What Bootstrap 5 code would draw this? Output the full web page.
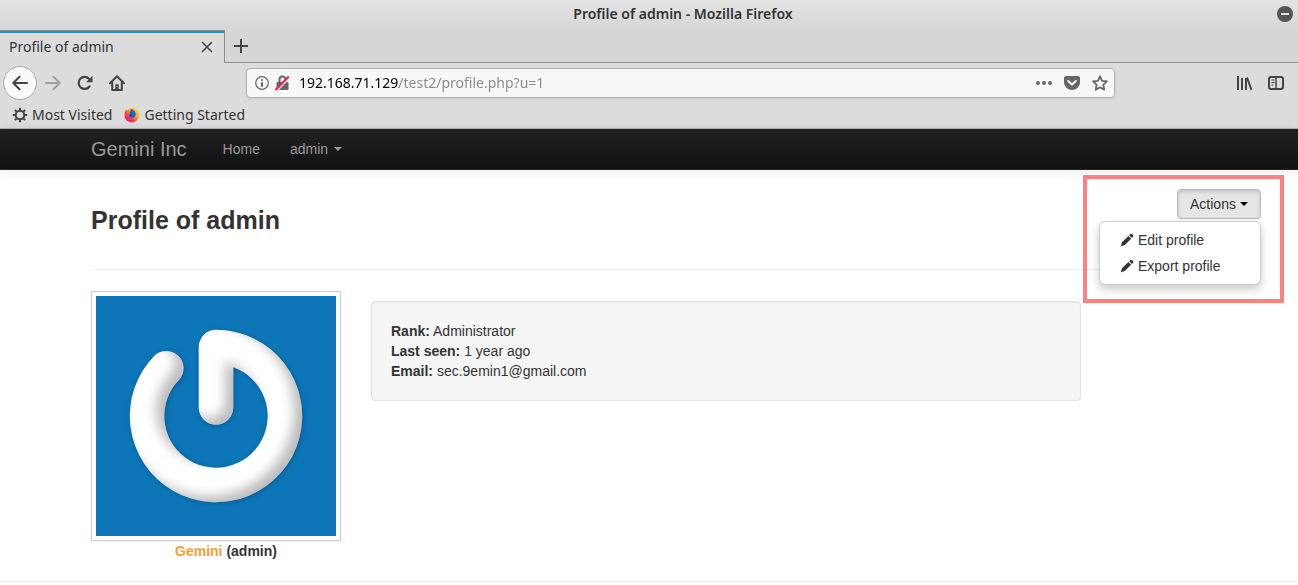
<!DOCTYPE html>
<html lang="en">
<head>
<meta charset="utf-8">
<meta name="viewport" content="width=device-width, initial-scale=1">
<title>Profile of admin</title>
<link rel="stylesheet" href="https://cdn.jsdelivr.net/npm/bootstrap@5.3.0/dist/css/bootstrap.min.css">
<style>
  body { font-family: "Liberation Sans", Arial, sans-serif; font-size: 14px; line-height: 20px; color: #333; background: #fff; }
  .browser { font-family: "Noto Sans", "Open Sans", sans-serif; color: #333; background: #dcdcdc; }
  .browser .btn { --bs-btn-border-width: 0px; line-height: 1; color: #444; }
  .browser svg, .dropdown-menu svg { display: block; flex: none; }

  /* window frame */
  .titlebar { height: 30px; padding-left: 68px; background: linear-gradient(#e3e3e3, #d6d6d6); font-size: 14px; line-height: 28px; font-weight: 600; }
  .minimise { top: 6px; right: 5px; }
  .tabstrip { height: 33px; background: #d6d6d6; }
  .tab { width: 225px; padding: 0 11px 0 9px; border-top: 1px solid #8c8c8c; border-right: 1px solid #8c8c8c; background: #dcdcdc; box-shadow: inset 0 2px #2090d0; font-size: 14px; line-height: 32px; }
  .tabstrip-rest { border-bottom: 1px solid #8c8c8c; }
  .toolbar { height: 40px; padding: 0 6px 0 3px; }
  .tool { width: 32px; height: 32px; }
  .tool-back { width: 34px; height: 34px; border: 1px solid #a8a8a8 !important; background: #f9f9f9 !important; }
  .urlbar { height: 30px; min-width: 0; margin: 0 113px; padding: 0 6px 0 8px; border: 1px solid #b0b0b0; border-radius: 4px; background: #f8f8f8; box-shadow: 0 1px 3px rgba(0,0,0,.08); }
  .page-tools { gap: 12px; }
  .address { min-width: 0; border: 0; outline: 0; font-size: 14px; line-height: 28px; color: #888;
             background: linear-gradient(90deg, #000 100px, #888 100px); -webkit-background-clip: text; background-clip: text; -webkit-text-fill-color: transparent; }
  .bookmarks { height: 26px; padding-bottom: 2px; border-bottom: 1px solid #b4b4b4; font-size: 14px; line-height: 22px; }
  .bookmarks a { color: #333; }

  /* site */
  .page-frame { padding-left: 91px; padding-right: 37px; }
  .site-nav { height: 41px; background: linear-gradient(#222, #111); border-bottom: 1px solid #252525; box-shadow: 0 1px 10px rgba(0,0,0,.1); }
  .site-nav a { color: #999; }
  .site-nav .navbar-brand { margin-right: 21px; font-size: 20px; line-height: 20px; }
  .site-nav .nav-link { --bs-nav-link-color: #999; padding: 0 15px !important; line-height: 20px; }
  .dropdown-toggle::after { border-top-width: 4px; border-left-width: 4px; border-right-width: 4px; vertical-align: 3px; margin-left: 4px; }
  .site-nav .dropdown-toggle::after { margin-left: 6px; }
  .profile-head { height: 100px; padding-top: 19px; border-bottom: 1px solid #eee; }
  .profile-head h3 { padding-top: 11px; font-size: 25px; line-height: 40px; font-weight: 700; }
  .btn-actions { width: 84px; height: 30px; padding: 0; font-size: 14px; line-height: 20px; color: #333 !important; border: 1px solid #bbb !important; background: #e6e6e6 !important; box-shadow: inset 0 2px 4px rgba(0,0,0,.15), 0 1px 2px rgba(0,0,0,.05); border-radius: 4px; }
  .btn-actions::after { color: #000; }
  .actions-menu { top: 32px; right: 0; width: 162px; padding: 5px 0; font-size: 14px; border: 1px solid #ccc; border-radius: 6px; box-shadow: 0 5px 10px rgba(0,0,0,.2); }
  .actions-menu .dropdown-item { padding: 3px 20px; line-height: 20px; color: #333; gap: 4px; }
  .callout { top: -14px; right: -23px; width: 201px; height: 128px; border: 4px solid #ff8080; z-index: 1001; pointer-events: none; }
  .profile-body { padding: 21px 0 20px; }
  .profile-side { width: 270px; flex: none; }
  .avatar { width: 250px; padding: 4px; border: 1px solid #ccc; box-shadow: 0 1px 3px rgba(0,0,0,.055); }
  .member { color: #f89f2f; }
  .info { margin: 10px 180px 0 10px; padding: 19px; border: 1px solid #e3e3e3; border-radius: 4px; background: #f5f5f5; box-shadow: inset 0 1px 1px rgba(0,0,0,.05); }
  .page-end { border-top: 1px solid #eee; }
</style>
</head>
<body>
<header class="browser">
  <div class="titlebar position-relative text-center">
    Profile of admin - Mozilla Firefox
    <button class="minimise btn p-0 position-absolute" aria-label="Minimise">
      <svg width="16" height="16"><circle cx="8" cy="8" r="8" fill="#555"/><path d="M4 8h8" stroke="#e4e4e4" stroke-width="2"/></svg>
    </button>
  </div>
  <div class="tabstrip d-flex">
    <div class="tab d-flex align-items-center justify-content-between">
      <span>Profile of admin</span>
      <button class="btn p-0" aria-label="Close tab">
        <svg width="12" height="12" fill="none" stroke="#444" stroke-width="1.6" stroke-linecap="round"><path d="M1.500 1.500l9 9M10.500 1.500l-9 9"/></svg>
      </button>
    </div>
    <div class="tabstrip-rest flex-grow-1 d-flex align-items-center ps-2">
      <button class="btn p-0" aria-label="New tab">
        <svg width="16" height="16" fill="none" stroke="#444" stroke-width="2"><path d="M8 1v14M1 8h14"/></svg>
      </button>
    </div>
  </div>
  <div class="toolbar d-flex align-items-center">
    <div class="d-flex align-items-center">
      <button class="tool-back btn p-0 rounded-circle d-flex align-items-center justify-content-center" aria-label="Back">
        <svg width="16" height="16" fill="none" stroke="#444" stroke-width="2" stroke-linecap="round" stroke-linejoin="round"><path d="M15 8H1.500M7.500 1.800L1.300 8l6.200 6.200"/></svg>
      </button>
      <button class="tool btn p-0 d-flex align-items-center justify-content-center" aria-label="Forward">
        <svg width="16" height="16" fill="none" stroke="#a0a0a0" stroke-width="2" stroke-linecap="round" stroke-linejoin="round"><path d="M1 8h13.500M8.500 1.800L14.700 8l-6.200 6.200"/></svg>
      </button>
      <button class="tool btn p-0 d-flex align-items-center justify-content-center" aria-label="Reload">
        <svg width="16" height="16"><path d="M12.500 11.500A6 6 0 1 1 12 3.800" fill="none" stroke="#444" stroke-width="2.200" stroke-linecap="round"/><path d="M15.500 .8v6.400H9.200z" fill="#444"/></svg>
      </button>
      <button class="tool btn p-0 d-flex align-items-center justify-content-center" aria-label="Home">
        <svg width="16" height="16"><path d="M1 8.300L8 1.300l7 7M3.200 7v8h9.600V7" fill="none" stroke="#444" stroke-width="2" stroke-linecap="round" stroke-linejoin="round"/><path d="M6.300 15V9.300h3.400V15z" fill="#444"/><path d="M7.500 11h1v1h-1z" fill="#ddd"/></svg>
      </button>
    </div>
    <div class="urlbar flex-grow-1 d-flex align-items-center">
      <svg width="14" height="14" aria-hidden="true"><circle cx="7" cy="7" r="6.300" fill="none" stroke="#666" stroke-width="1.200"/><circle cx="7" cy="4" r="1.100" fill="#666"/><path d="M7 6.200v4.600" stroke="#666" stroke-width="2"/></svg>
      <svg class="ms-1" width="18" height="16" aria-hidden="true"><path d="M6.500 8V4.500a3 3 0 0 1 6 0V8" fill="none" stroke="#666" stroke-width="2"/><rect x="3.500" y="7" width="12" height="8" rx="1" fill="#666"/><path d="M4.300 15.500L16.500 3" stroke="#f8f8f8" stroke-width="1.500"/><path d="M2.500 15L15.800 1.400" stroke="#ff1c55" stroke-width="2.200"/></svg>
      <input class="address flex-grow-1 p-0 ms-2" type="text" aria-label="Address" value="192.168.71.129/test2/profile.php?u=1">
      <div class="page-tools d-flex align-items-center">
        <button class="btn p-0" aria-label="Page actions"><svg width="16" height="16" fill="#666"><circle cx="2" cy="8" r="2"/><circle cx="8" cy="8" r="2"/><circle cx="14" cy="8" r="2"/></svg></button>
        <button class="btn p-0" aria-label="Save to Pocket"><svg width="16" height="16"><path d="M2 1h12q2 0 2 2v4.500a8 7.500 0 0 1-16 0V3q0-2 2-2z" fill="#666"/><path d="M4.200 6L8 9.600 11.800 6" fill="none" stroke="#f8f8f8" stroke-width="2" stroke-linecap="round" stroke-linejoin="round"/></svg></button>
        <button class="btn p-0" aria-label="Bookmark this page"><svg width="16" height="16"><path d="M8 1.300l2.050 4.500 4.850.6-3.550 3.400.9 4.900L8 12.300l-4.250 2.400.9-4.900L1.100 6.400l4.850-.6z" fill="none" stroke="#666" stroke-width="1.800" stroke-linejoin="round"/></svg></button>
      </div>
    </div>
    <div class="d-flex align-items-center">
      <button class="tool btn p-0 d-flex align-items-center justify-content-center" aria-label="Library"><svg width="16" height="16" fill="none" stroke="#444" stroke-width="2"><path d="M2 1v14M6 3v12M10 3v12M11 2.500L15.500 15"/></svg></button>
      <button class="tool btn p-0 d-flex align-items-center justify-content-center" aria-label="Sidebars"><svg width="16" height="16" fill="none" stroke="#444"><rect x="1" y="2" width="14" height="12" rx="2" stroke-width="2"/><path d="M8 2v12" stroke-width="1.500"/><path d="M3.500 5h3M3.500 7.500h3M3.500 10h2"/></svg></button>
    </div>
  </div>
  <nav class="bookmarks d-flex ps-2 gap-2" aria-label="Bookmarks">
    <a href="#" class="d-flex align-items-center gap-1 ps-1 pe-1 text-decoration-none">
      <svg width="16" height="16" fill="none" stroke="#444"><circle cx="8" cy="8" r="4.300" stroke-width="2"/><path d="M8 .8v2.500M8 12.700v2.500M.8 8h2.500M12.700 8h2.500M2.900 2.900l1.800 1.800M11.300 11.300l1.800 1.800M2.900 13.100l1.800-1.800M11.300 4.700l1.800-1.800" stroke-width="2"/></svg>
      Most Visited
    </a>
    <a href="#" class="d-flex align-items-center gap-1 text-decoration-none">
      <svg width="16" height="16"><defs><linearGradient id="flame" x1="1" y1="0" x2=".15" y2=".9"><stop offset="0" stop-color="#fff04a"/><stop offset=".45" stop-color="#ffa520"/><stop offset=".75" stop-color="#ff3b3b"/><stop offset="1" stop-color="#e8129a"/></linearGradient></defs><path d="M1.800 2.500Q3 3 3.700 3 6 .8 8.500 1 13 .8 15 5q1.200 4-1 7-2.500 3.400-6.300 3.400Q2.500 15.200.8 10.500 0 6 1.800 2.500z" fill="url(#flame)"/><path d="M7 2.300q3.200.2 4.400 3.200 1 2.800-.8 4.500-1.800 1.500-4 .7-1.800-1-1.400-2.500 1.500 1 3 0Q6 7.500 5.500 5.500 7 5 7 2.300z" fill="#1767d2"/><path d="M5.200 7q2 .3 3 1.700-1.200 1-2.700.3z" fill="#0c3b9c"/></svg>
      Getting Started
    </a>
  </nav>
</header>

<nav class="site-nav navbar navbar-expand justify-content-start py-0 page-frame position-relative">
  <a class="navbar-brand p-0" href="#">Gemini Inc</a>
  <ul class="navbar-nav">
    <li class="nav-item"><a class="nav-link" href="#">Home</a></li>
    <li class="nav-item"><a class="nav-link dropdown-toggle" href="#" role="button">admin</a></li>
  </ul>
</nav>

<main>
  <div class="page-frame">
    <div class="profile-head d-flex justify-content-between align-items-start">
      <h3 class="m-0">Profile of admin</h3>
      <div class="position-relative">
        <button class="btn btn-actions dropdown-toggle show d-block" type="button" aria-expanded="true">Actions</button>
        <ul class="dropdown-menu actions-menu show">
          <li><a class="dropdown-item d-flex align-items-center" href="#"><svg width="14" height="14" fill="#333"><path d="M.8 13.200l1.200-4 6.400-6.200 2.800 2.800-6.400 6.200zM9.200 2.200l1.200-1.100q.8-.7 1.600 0l1.100 1.100q.7.800 0 1.600L12 5z"/></svg>Edit profile</a></li>
          <li><a class="dropdown-item d-flex align-items-center" href="#"><svg width="14" height="14" fill="#333"><path d="M.8 13.200l1.200-4 6.400-6.200 2.800 2.800-6.400 6.200zM9.200 2.200l1.200-1.100q.8-.7 1.600 0l1.100 1.100q.7.800 0 1.600L12 5z"/></svg>Export profile</a></li>
        </ul>
        <div class="callout position-absolute"></div>
      </div>
    </div>
    <div class="profile-body d-flex align-items-start">
      <div class="profile-side">
        <div class="avatar">
          <svg class="d-block w-100" viewBox="0 0 240 240" role="img" aria-label="Avatar">
            <defs>
              <filter id="relief" x="-10%" y="-10%" width="120%" height="120%" color-interpolation-filters="sRGB">
                <feOffset in="SourceAlpha" dx="-8" dy="-6"/><feGaussianBlur stdDeviation="6" result="lit"/>
                <feComposite in="SourceAlpha" in2="lit" operator="out" result="edge"/>
                <feFlood flood-color="#777" flood-opacity=".5"/><feComposite in2="edge" operator="in" result="shade"/>
                <feOffset in="SourceAlpha" dx="1" dy="1"/><feGaussianBlur stdDeviation="2" result="soft"/>
                <feFlood flood-color="#043a66" flood-opacity=".5"/><feComposite in2="soft" operator="in" result="drop"/>
                <feMerge><feMergeNode in="drop"/><feMergeNode in="SourceGraphic"/><feMergeNode in="shade"/></feMerge>
              </filter>
            </defs>
            <rect width="240" height="240" fill="#0c76b8"/>
            <path filter="url(#relief)" fill="#fff" d="M120 33.800A86.200 86.200 0 1 1 59.050 59.050A17.300 17.300 0 0 1 83.440 83.440A51.700 51.700 0 1 0 137.300 71.300V111.400A17.300 17.300 0 0 1 102.700 111.400V51A17.300 17.300 0 0 1 120 33.800z"/>
          </svg>
        </div>
        <div class="text-center fw-bold"><span class="member">Gemini</span> (admin)</div>
      </div>
      <div class="info flex-grow-1">
        <div><strong>Rank:</strong> Administrator</div>
        <div><strong>Last seen:</strong> 1 year ago</div>
        <div><strong>Email:</strong> sec.9emin1@gmail.com</div>
      </div>
    </div>
  </div>
  <div class="page-end"></div>
</main>
<script src="https://cdn.jsdelivr.net/npm/bootstrap@5.3.0/dist/js/bootstrap.bundle.min.js"></script>
</body>
</html>
